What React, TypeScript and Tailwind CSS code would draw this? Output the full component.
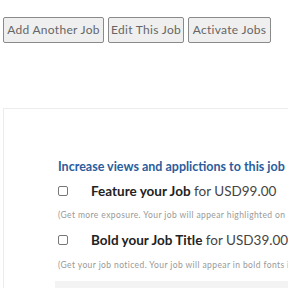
import React from "react";

export default function App() {
  const font = { fontFamily: "Lato, 'Open Sans', sans-serif" };
  return (
    <div className="w-[288px] h-[288px] overflow-hidden bg-white" style={font}>
      <div className="flex gap-[4px] pt-[17px] pl-[3px]">
        <button className="h-[26px] w-[101px] border border-[#8a8a8a] rounded-[2px] bg-[#efefef] text-[12px] tracking-[0.3px] text-[#666] whitespace-nowrap">
          Add Another Job
        </button>
        <button className="h-[26px] w-[76px] border border-[#8a8a8a] rounded-[2px] bg-[#efefef] text-[12px] tracking-[0.3px] text-[#666] whitespace-nowrap">
          Edit This Job
        </button>
        <button className="h-[26px] w-[83px] border border-[#8a8a8a] rounded-[2px] bg-[#efefef] text-[12px] tracking-[0.3px] text-[#666] whitespace-nowrap">
          Activate Jobs
        </button>
      </div>
      <div className="mt-[65px] ml-[3px] w-[320px] h-[200px] border border-[#ececec] pt-[50px] pl-[54px]">
        <div className="text-[12.5px] leading-[16px] font-bold text-[#2b5d9c] whitespace-nowrap">
          Increase views and applictions to this job
        </div>
        <div className="flex items-center mt-[6px] h-[20px]">
          <span className="w-[10px] h-[10px] border border-[#777] rounded-[2px] bg-white" />
          <span className="ml-[23px] text-[13.5px] text-[#222] whitespace-nowrap">
            <b className="font-bold">Feature your Job</b>{" "}
            <span className="text-[#444]">for USD99.00</span>
          </span>
        </div>
        <div className="mt-[9px] text-[8.5px] leading-[10px] tracking-[0.4px] text-[#999] whitespace-nowrap">
          (Get more exposure. Your job will appear highlighted on top of the listings)
        </div>
        <div className="flex items-center mt-[10px] h-[20px]">
          <span className="w-[10px] h-[10px] border border-[#777] rounded-[2px] bg-white" />
          <span className="ml-[23px] text-[13.5px] text-[#222] whitespace-nowrap">
            <b className="font-bold">Bold your Job Title</b>{" "}
            <span className="text-[#444]">for USD39.00</span>
          </span>
        </div>
        <div className="mt-[10px] text-[8.5px] leading-[10px] tracking-[0.4px] text-[#999] whitespace-nowrap">
          (Get your job noticed. Your job will appear in bold fonts in the listings)
        </div>
        <div className="mt-[11px] -ml-[3px] h-[20px] bg-[#f3f3f3]" />
      </div>
    </div>
  );
}
